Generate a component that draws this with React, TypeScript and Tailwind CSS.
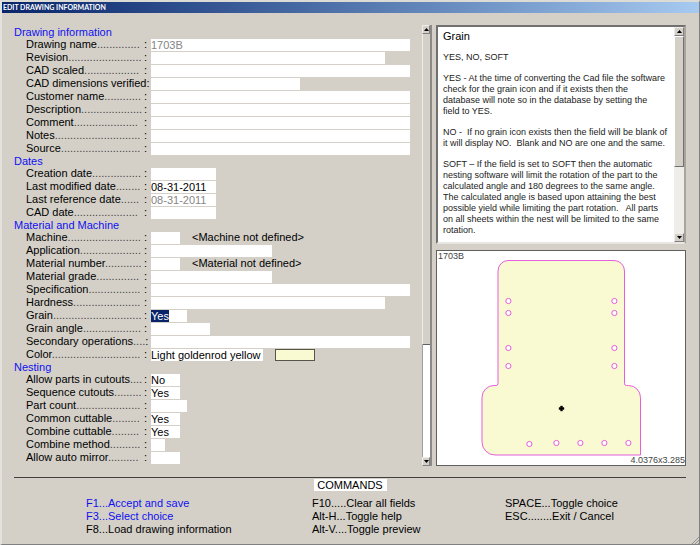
import { useEffect, useRef } from "react";
import clsx from "clsx";

type Field = {
  label: string;
  dots: number;
  width: string;
  value?: string;
  note?: string;
  muted?: boolean;
  active?: boolean;
  swatch?: boolean;
};

const SECTIONS: { title: string; fields: Field[] }[] = [
  {
    title: "Drawing information",
    fields: [
      { label: "Drawing name", dots: 14, width: "flex-1", value: "1703B", muted: true },
      { label: "Revision", dots: 24, width: "w-[234px]" },
      { label: "CAD scaled", dots: 18, width: "flex-1" },
      { label: "CAD dimensions verified", dots: 0, width: "w-[149px]" },
      { label: "Customer name", dots: 12, width: "flex-1" },
      { label: "Description", dots: 20, width: "flex-1" },
      { label: "Comment", dots: 21, width: "flex-1" },
      { label: "Notes", dots: 28, width: "flex-1" },
      { label: "Source", dots: 26, width: "flex-1" },
    ],
  },
  {
    title: "Dates",
    fields: [
      { label: "Creation date", dots: 16, width: "w-[65px]" },
      { label: "Last modified date", dots: 8, width: "w-[65px]", value: "08-31-2011" },
      { label: "Last reference date", dots: 6, width: "w-[65px]", value: "08-31-2011", muted: true },
      { label: "CAD date", dots: 21, width: "w-[65px]" },
    ],
  },
  {
    title: "Material and Machine",
    fields: [
      { label: "Machine", dots: 24, width: "w-[29px]", note: "<Machine not defined>" },
      { label: "Application", dots: 20, width: "w-[121px]" },
      { label: "Material number", dots: 12, width: "w-[29px]", note: "<Material not defined>" },
      { label: "Material grade", dots: 14, width: "w-[121px]" },
      { label: "Specification", dots: 17, width: "flex-1" },
      { label: "Hardness", dots: 22, width: "w-[234px]" },
      { label: "Grain", dots: 29, width: "w-[36px]", value: "Yes", active: true },
      { label: "Grain angle", dots: 19, width: "w-[59px]" },
      { label: "Secondary operations", dots: 4, width: "flex-1" },
      { label: "Color", dots: 29, width: "w-[112px]", value: "Light goldenrod yellow", swatch: true },
    ],
  },
  {
    title: "Nesting",
    fields: [
      { label: "Allow parts in cutouts", dots: 4, width: "w-[29px]", value: "No" },
      { label: "Sequence cutouts", dots: 9, width: "w-[29px]", value: "Yes" },
      { label: "Part count", dots: 21, width: "w-[36px]" },
      { label: "Common cuttable", dots: 9, width: "w-[29px]", value: "Yes" },
      { label: "Combine cuttable", dots: 9, width: "w-[29px]", value: "Yes" },
      { label: "Combine method", dots: 10, width: "w-[14px]" },
      { label: "Allow auto mirror", dots: 10, width: "w-[29px]" },
    ],
  },
];

const HELP = [
  ["YES, NO, SOFT"],
  [
    "YES - At the time of converting the Cad file the software",
    "check for the grain icon and if it exists then the",
    "database will note so in the database by setting the",
    "field to YES.",
  ],
  [
    "NO -  If no grain icon exists then the field will be blank of",
    "it will display NO.  Blank and NO are one and the same.",
  ],
  [
    "SOFT – If the field is set to SOFT then the automatic",
    "nesting software will limit the rotation of the part to the",
    "calculated angle and 180 degrees to the same angle.",
    "The calculated angle is based upon attaining the best",
    "possible yield while limiting the part rotation.   All parts",
    "on all sheets within the nest will be limited to the same",
    "rotation.",
  ],
];

const COMMANDS = [
  [
    { key: "F1", dots: "...", text: "Accept and save", blue: true },
    { key: "F3", dots: "...", text: "Select choice", blue: true },
    { key: "F8", dots: "...", text: "Load drawing information" },
  ],
  [
    { key: "F10", dots: ".....", text: "Clear all fields" },
    { key: "Alt-H", dots: "...", text: "Toggle help" },
    { key: "Alt-V", dots: "....", text: "Toggle preview" },
  ],
  [
    { key: "SPACE", dots: "...", text: "Toggle choice" },
    { key: "ESC", dots: "........", text: "Exit / Cancel" },
  ],
];

const HOLES = [
  [72, 51], [72, 63], [72, 98], [72, 116],
  [178, 51], [178, 63], [178, 98], [178, 116],
  [93, 194], [120, 193], [144, 193], [168, 193], [192, 193],
];

function FieldRow({ field }: { field: Field }) {
  const id = field.label.toLowerCase().replace(/ /g, "-");
  const input = useRef<HTMLInputElement>(null);

  // the active field starts focused with its value selected
  useEffect(() => {
    if (field.active) {
      input.current?.focus();
      input.current?.select();
    }
  }, [field.active]);

  return (
    <div className="flex h-[13px] items-center pl-3">
      <label htmlFor={id} className="flex w-[125px] shrink-0 justify-between pr-1 whitespace-nowrap">
        <span>
          {field.label}
          <span className="text-[#444]">{".".repeat(field.dots)}</span>
        </span>
        <span>:</span>
      </label>
      <input
        ref={input}
        id={id}
        defaultValue={field.value}
        readOnly={field.muted}
        className={clsx(
          "h-3 min-w-0 rounded-none bg-white leading-3 outline-none selection:bg-[#0a246a] selection:text-white",
          field.width,
          field.muted ? "text-[#858585]" : "text-black",
        )}
      />
      {field.note && <span className="pl-3 whitespace-nowrap">{field.note}</span>}
      {field.swatch && <span className="ml-3 h-3 w-10 border border-[#55554a] bg-[#fafad2]" />}
    </div>
  );
}

function ScrollButton({ down }: { down?: boolean }) {
  return (
    <button
      type="button"
      aria-label={down ? "Scroll down" : "Scroll up"}
      className="flex h-[9px] w-full shrink-0 items-center justify-center border border-t-[#f0eeea] border-r-[#808080] border-b-[#808080] border-l-[#f0eeea] bg-[#d4d0c8]"
    >
      <svg width="5" height="3" viewBox="0 0 5 3" className={clsx(down && "rotate-180")}>
        <path d="M0 3 2.5 0 5 3z" fill="#000" />
      </svg>
    </button>
  );
}

function PartPreview() {
  return (
    <svg viewBox="0 0 250 216" className="block w-full">
      <path
        d="M72 10.5H178A10.500 10.500 0 0 1 188.500 21V133.500Q188.500 135.500 190.500 135.500H192.500A12 12 0 0 1 204.500 147.500V205H59A13 13 0 0 1 46 192V147.500A12 12 0 0 1 58 135.500H60Q62 135.500 62 133.500V21A10.500 10.500 0 0 1 72 10.500Z"
        fill="#fafad2"
        stroke="#e45fdc"
      />
      {HOLES.map(([x, y]) => (
        <circle key={`${x}-${y}`} cx={x + 0.4} cy={y} r="2.600" fill="#fff" stroke="#e45fdc" />
      ))}
      <path d="M124.500 156H126.500V157.500H128V159.500H126.500V161H124.500V159.500H123V157.500H124.500Z" fill="#000" stroke="#000" strokeWidth=".4" />
    </svg>
  );
}

export default function App() {
  return (
    <div className="flex min-h-[545px] flex-col border-t-2 border-r border-b border-l-2 border-t-[#dddbd6] border-r-[#808080] border-b-[#808080] border-l-[#e4e2dd] bg-[#d4d0c8] font-['Liberation_Sans',Arial,sans-serif] text-[11px] leading-[13px] text-black">
      <header className="flex h-[11px] items-center bg-linear-to-r from-[#0a246a] to-[#a6caf0] pl-px font-[Lato,sans-serif] text-[7px] leading-none font-bold text-white">
        <h1>EDIT DRAWING INFORMATION</h1>
      </header>

      <main className="pt-3 pr-[13px] pl-3">
        <div className="flex h-[441px] gap-1">
          <form className="flex min-w-0 flex-1 gap-3" onSubmit={(e) => e.preventDefault()}>
            <div className="min-w-0 flex-1 pt-px">
              {SECTIONS.map((s) => (
                <section key={s.title}>
                  <h2 className="h-3 leading-3 text-[#1010f0]">{s.title}</h2>
                  {s.fields.map((f) => (
                    <FieldRow key={f.label} field={f} />
                  ))}
                </section>
              ))}
            </div>
            <div className="flex w-[10px] flex-col border-r-2 border-[#8c8a86] bg-white">
              <ScrollButton />
              <div className="h-[311px] border-b border-l border-b-[#606060] border-l-[#f0eeea] bg-[#d4d0c8]" />
              <div className="flex-1 border-l border-[#a0a0a0]" />
              <ScrollButton down />
            </div>
          </form>

          <div className="flex w-[250px] flex-col gap-[6px]">
            <section className="flex h-[219px] border-2 border-t-[#707070] border-r-[#a8a59f] border-b-[#e8e6e2] border-l-[#707070] bg-white">
              <div className="min-w-0 flex-1 space-y-[10px] pt-1 pl-[5px] text-[9px] leading-[11px] whitespace-pre text-[#222]">
                <h2 className="text-[11px] text-black">Grain</h2>
                {HELP.map((lines) => (
                  <p key={lines[0]}>{lines.join("\n")}</p>
                ))}
              </div>
              <div className="flex w-[10px] flex-col bg-[#efedea]">
                <ScrollButton />
                <div className="h-[131px] border border-t-white border-r-[#707070] border-b-[#707070] border-l-white bg-[#d4d0c8]" />
                <div className="flex-1" />
                <ScrollButton down />
              </div>
            </section>
            <section className="relative flex-1 overflow-hidden bg-white text-[9px] leading-[10px] text-[#444] outline outline-1 -outline-offset-1 outline-[#606060]">
              <PartPreview />
              <span className="absolute top-px left-[2px]">1703B</span>
              <span className="absolute right-px bottom-px">4.0376x3.285</span>
            </section>
          </div>
        </div>

        <footer className="mt-[11px] border-t border-[#404040] pt-px">
          <h2 className="mx-auto w-[73px] bg-white text-center leading-3">COMMANDS</h2>
          <div className="grid grid-cols-[226fr_193fr_181fr] pt-[6px] pl-[72px]">
            {COMMANDS.map((col) => (
              <div key={col[0].key} className="flex flex-col items-start">
                {col.map((c) => (
                  <button key={c.key} type="button" className={clsx("h-[13px] whitespace-nowrap", c.blue && "text-[#1010f0]")}>
                    {c.key}
                    {c.dots}
                    {c.text}
                  </button>
                ))}
              </div>
            ))}
          </div>
        </footer>
      </main>

      <svg width="8" height="8" viewBox="0 0 8 8" className="mt-auto self-end" stroke="#909090" aria-hidden>
        <path d="M1 8 8 1M4 8 8 4M7 8 8 7" />
      </svg>
    </div>
  );
}
